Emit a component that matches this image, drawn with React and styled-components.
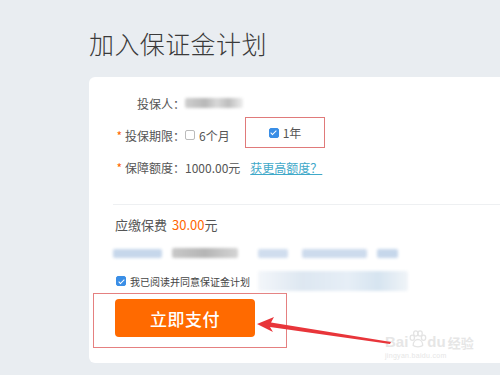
import React from 'react';
import styled, { createGlobalStyle } from 'styled-components';

const Global = createGlobalStyle`
  html, body {
    margin: 0;
    padding: 0;
    background: #e9edf1;
    overflow: hidden;
  }
  body {
    font-family: "Noto Sans CJK SC", "Liberation Sans", sans-serif;
    color: #555;
  }
`;

const Page = styled.div`
  width: 500px;
  height: 375px;
  padding-left: 89px;
  box-sizing: border-box;
  overflow: hidden;
`;

const Title = styled.h1`
  margin: 0 0 16px;
  padding-top: 26px;
  font-size: 25px;
  line-height: 35px;
  font-weight: 300;
  color: #3a3a3a;
  letter-spacing: 0.4px;
`;

const Card = styled.div`
  position: relative;
  width: 440px;
  height: 286px;
  background: #fff;
  border-radius: 6px;
`;

const Form = styled.div`
  padding: 10px 0 21px;
`;

const Row = styled.div`
  display: flex;
  align-items: center;
  height: 32px;
  font-size: 12px;
  color: #555;
`;

const Label = styled.span`
  width: 96px;
  text-align: right;
  flex-shrink: 0;
`;

const Star = styled.span`
  color: #f60;
  margin-right: 3px;
`;

const Blur = styled.span`
  display: inline-block;
  flex-shrink: 0;
  width: ${p => p.$w}px;
  height: ${p => p.$h}px;
  margin-left: ${p => p.$ml || 0}px;
  background: ${p => p.$bg};
  filter: blur(1.5px);
  border-radius: 2px;
`;

const Box = styled.span`
  display: inline-block;
  width: 8px;
  height: 8px;
  border: 1px solid ${p => (p.$on ? '#3a8ee6' : '#bbb')};
  background: ${p => (p.$on ? '#3a8ee6' : '#fff')};
  border-radius: 2px;
  position: relative;
  margin-right: 4px;
  flex-shrink: 0;
  &::after {
    content: '';
    display: ${p => (p.$on ? 'block' : 'none')};
    position: absolute;
    left: 2.5px;
    top: 0.5px;
    width: 2px;
    height: 5px;
    border: solid #fff;
    border-width: 0 1.5px 1.5px 0;
    transform: rotate(45deg);
  }
`;

const Option = styled.span`
  display: inline-flex;
  align-items: center;
`;

const Marked = styled.span`
  display: inline-flex;
  align-items: center;
  box-sizing: border-box;
  width: 80px;
  height: 31px;
  margin-left: 15px;
  margin-bottom: 5px;
  padding-left: 23px;
  border: 1px solid #e07a7a;
`;

const Link = styled.a`
  margin-left: 10px;
  color: #3fa9c9;
  text-decoration: underline;
`;

const Divider = styled.div`
  margin-left: 24px;
  height: 1px;
  background: #eef0f2;
`;

const Fee = styled.div`
  display: flex;
  align-items: center;
  height: 38px;
  padding-left: 26px;
  font-size: 13px;
  color: #555;
`;

const Price = styled.span`
  color: #f60;
  margin-left: 5px;
`;

const BlurRow = styled.div`
  display: flex;
  align-items: center;
  height: 20px;
  padding-left: 24px;
`;

const Agree = styled.div`
  display: flex;
  align-items: center;
  height: 20px;
  margin-top: 8px;
  padding-left: 27px;
  font-size: 10px;
  color: #444;
`;

const PayFrame = styled.div`
  margin: 2px 0 0 4px;
  width: 194px;
  height: 55px;
  box-sizing: border-box;
  border: 1px solid #e58080;
  padding: 5px 0 0 21px;
`;

const PayButton = styled.button`
  width: 140px;
  height: 38px;
  border: none;
  border-radius: 4px;
  background: #ff6a00;
  color: #fff;
  font-family: "Noto Sans CJK SC", sans-serif;
  font-size: 17px;
  font-weight: 500;
  letter-spacing: 0.5px;
  cursor: pointer;
`;

const Arrow = styled.svg`
  position: absolute;
  left: 160px;
  top: 232px;
`;

const Watermark = styled.div`
  position: absolute;
  left: 296px;
  top: 253px;
  color: #e6e6e6;
  font-family: "Liberation Sans", sans-serif;
  line-height: 1;
`;

const MarkTop = styled.div`
  display: flex;
  align-items: flex-end;
  font-size: 15px;
  font-weight: bold;
`;

const MarkSub = styled.div`
  font-size: 7px;
  margin-top: 3px;
  letter-spacing: 0.3px;
`;

const MarkCn = styled.span`
  font-family: "Noto Sans CJK SC", sans-serif;
  font-size: 13px;
  margin-left: 2px;
`;

function Paw() {
  return (
    <svg width="19" height="19" viewBox="0 0 22 22">
      <g fill="none" stroke="#e4e4e4" strokeWidth="1.5">
        <ellipse cx="5" cy="9" rx="2.5" ry="3" />
        <ellipse cx="9" cy="4" rx="2.5" ry="3" />
        <ellipse cx="14" cy="4" rx="2.5" ry="3" />
        <ellipse cx="18" cy="9" rx="2.5" ry="3" />
        <path d="M6 18 C6 13 9 11 11.5 11 C14 11 17 13 17 18 C15 20 8 20 6 18 Z" />
      </g>
    </svg>
  );
}

export default function App() {
  return (
    <>
      <Global />
      <Page>
        <Title>加入保证金计划</Title>
        <Card>
          <Form>
            <Row>
              <Label>投保人：</Label>
              <Blur $w={58} $h={10} $bg="linear-gradient(90deg,#cfcfcf,#b8b8b8 35%,#d8d8d8 55%,#bdbdbd 75%,#eee)" />
            </Row>
            <Row>
              <Label><Star>*</Star>投保期限：</Label>
              <Option><Box />6个月</Option>
              <Marked>
                <Option><Box $on />1年</Option>
              </Marked>
            </Row>
            <Row>
              <Label><Star>*</Star>保障额度：</Label>
              <span>1000.00元</span>
              <Link>获更高额度？</Link>
            </Row>
          </Form>
          <Divider />
          <Fee>
            应缴保费<Price>30.00</Price>元
          </Fee>
          <BlurRow>
            <Blur $w={49} $h={9} $bg="#c6d7eb" />
            <Blur $w={66} $h={10} $ml={10} $bg="linear-gradient(90deg,#c8c8c8,#b5b5b5 50%,#d4d4d4)" />
            <Blur $w={30} $h={9} $ml={20} $bg="#d0ddee" />
            <Blur $w={65} $h={9} $ml={14} $bg="#cddbed" />
            <Blur $w={21} $h={9} $ml={10} $bg="#c6d7eb" />
          </BlurRow>
          <Agree>
            <Box $on />
            我已阅读并同意保证金计划
            <Blur $w={150} $h={20} $ml={8} $bg="linear-gradient(90deg,#f3f6fa,#dde7f1 30%,#e6eef6 60%,#d6e4f0 80%,#f0f4f8)" />
          </Agree>
          <PayFrame>
            <PayButton>立即支付</PayButton>
          </PayFrame>
          <Watermark>
            <MarkTop>
              Bai<Paw />du<MarkCn>经验</MarkCn>
            </MarkTop>
            <MarkSub>jingyan.baidu.com</MarkSub>
          </Watermark>
          <Arrow width="150" height="45" viewBox="0 0 150 45">
            <polygon points="8,15 25,8 22,13.5 142,33 141,35 21,18 24,23" fill="#e8353a" />
          </Arrow>
        </Card>
      </Page>
    </>
  );
}
